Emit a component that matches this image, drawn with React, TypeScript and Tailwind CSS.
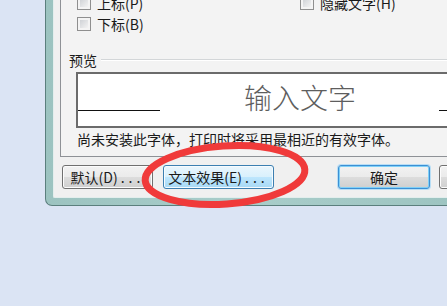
import React from "react";

function CheckBox() {
  return (
    <span className="block w-[14px] h-[14px] border border-[#8f8f8f] bg-[#f4f4f4] p-[2px] shrink-0">
      <span className="block w-full h-full bg-[linear-gradient(135deg,#cfd2d6,#f3f3f3)]" />
    </span>
  );
}

function Check({ label }: { label: string }) {
  return (
    <div className="flex items-center h-[14px]">
      <CheckBox />
      <span className="ml-[6px] leading-[14px] whitespace-nowrap">{label}</span>
    </div>
  );
}

function Btn({
  children,
  variant,
  className,
}: {
  children: React.ReactNode;
  variant: "normal" | "hover" | "default";
  className: string;
}) {
  const v =
    variant === "hover"
      ? "border-[#3c7fb1] bg-[linear-gradient(#eaf6fd,#d9f0fc_50%,#bee6fd_50%,#a7d9f5)] shadow-[inset_0_0_0_1px_#f6fbfe]"
      : variant === "default"
      ? "border-[#3c8fd4] bg-[linear-gradient(#f2f2f2,#ebebeb_50%,#dddddd_50%,#cfcfcf)] shadow-[inset_0_0_0_1px_#7fd0f7,0_0_0_1px_#b8def5]"
      : "border-[#707070] bg-[linear-gradient(#f2f2f2,#ebebeb_50%,#dddddd_50%,#cfcfcf)] shadow-[inset_0_0_0_1px_#fcfcfc]";
  return (
    <div
      className={`h-[24px] shrink-0 rounded-[3px] border flex items-center justify-center whitespace-nowrap leading-[16px] ${v} ${className}`}
    >
      {children}
    </div>
  );
}

export default function App() {
  return (
    <div className="relative w-[447px] h-[306px] overflow-hidden bg-[#dbe4f4] font-['Noto_Sans_CJK_SC','Noto_Sans',sans-serif] text-[14px] text-[#1a1a1a]">
      <div className="ml-[45px] w-[500px] h-[206px] border-l border-b border-[#5b7f7d] rounded-bl-[7px] bg-[linear-gradient(90deg,#9cc3c0,#a9cdca_40%,#98c0bd)] pl-[7px] pb-[7px]">
        <div className="h-full border-l border-b border-[#e3eeed] bg-[#f0f0f0] pl-[6px] rounded-bl-[2px] flex flex-col">
          {/* tab page */}
          <div className="h-[157px] shrink-0 border-l border-b border-[#8e9196] bg-[#f3f3f3] flex flex-col overflow-hidden">
            <div className="-mt-[4px] ml-[16px] grid grid-cols-[223px_auto] gap-y-[7px]">
              <Check label="上标(P)" />
              <Check label="隐藏文字(H)" />
              <Check label="下标(B)" />
              <div />
            </div>

            <div className="mt-[21px] ml-[8px] h-[16px] flex items-center">
              <span className="leading-[16px]">预览</span>
              <span className="ml-[4px] flex-1 border-t border-b border-t-[#d3d6d8] border-b-white" />
            </div>

            <div className="mt-[4px] ml-[15px] h-[56px] w-[420px] shrink-0 border-2 border-[#6b6b6b] bg-white flex">
              <div className="w-[82px] h-[37px] shrink-0 border-b border-[#111]" />
              <span className="ml-[84px] pt-[9px] text-[28px] leading-[28px] font-light text-[#5e5e5e] whitespace-nowrap">
                输入文字
              </span>
              <div className="ml-[83px] w-[40px] h-[37px] shrink-0 border-b border-[#111]" />
            </div>

            <div className="mt-[3px] ml-[16px] leading-[16px] whitespace-nowrap">
              尚未安装此字体，打印时将采用最相近的有效字体。
            </div>
          </div>

          {/* buttons */}
          <div className="mt-[8px] ml-[2px] flex">
            <Btn variant="normal" className="w-[91px]">
              默认(D)<span className="tracking-[4px] ml-[3px]">...</span>
            </Btn>
            <Btn variant="hover" className="ml-[10px] w-[111px]">
              文本效果(E)<span className="tracking-[4px] ml-[3px]">...</span>
            </Btn>
            <Btn variant="default" className="ml-[64px] w-[92px]">
              确定
            </Btn>
            <Btn variant="normal" className="ml-[9px] w-[92px]">
              取消
            </Btn>
          </div>
        </div>
      </div>

      <svg
        className="absolute left-0 top-0 pointer-events-none"
        width="447"
        height="306"
        viewBox="0 0 447 306"
      >
        <ellipse
          cx="225"
          cy="175"
          rx="80"
          ry="29"
          transform="rotate(-4 225 175)"
          fill="none"
          stroke="#f03a3a"
          strokeWidth="7"
        />
      </svg>
    </div>
  );
}
